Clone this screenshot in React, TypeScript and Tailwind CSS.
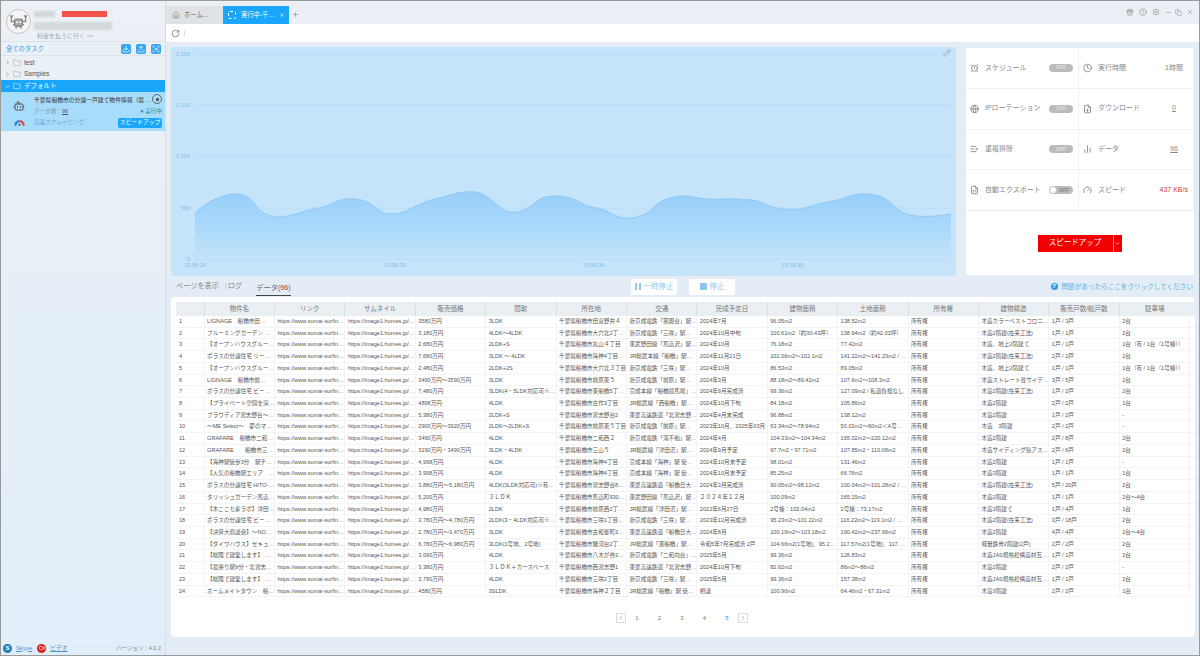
import {
  AlarmClock,
  Bot,
  ChartNoAxesColumn,
  ChevronDown,
  ChevronLeft,
  ChevronRight,
  CircleHelp,
  Clock,
  Copy,
  Download,
  FileDown,
  FileSpreadsheet,
  Folder,
  Gauge,
  Gift,
  Globe,
  Home,
  ListX,
  Minus,
  Pencil,
  Plus,
  RotateCw,
  ScanSearch,
  Settings,
  Upload,
  Video,
  X,
} from "lucide-react";

const columns = [
  "物件名",
  "リンク",
  "サムネイル",
  "販売価格",
  "間取",
  "所在地",
  "交通",
  "完成予定日",
  "建物面積",
  "土地面積",
  "所有権",
  "建物構造",
  "販売戸数/総戸数",
  "駐車場",
];

const rows = [
  ["LIGNAGE　船橋市田…", "3580万円", "3LDK", "千葉県船橋市田喜野井４", "新京成電鉄「薬園台」駅…", "2024年7月", "96.05m2", "138.52m2", "木造カラーベストコロニ…", "1戸 / 3戸", "2台"],
  ["ブルーミングガーデン …", "3,180万円", "4LDK～4LDK", "千葉県船橋市大穴北2丁…", "新京成電鉄「三咲」駅…", "2024年10月中旬", "100.61m2（約30.43坪）", "138.94m2（約42.03坪）", "木造2階建(在来工法)", "1戸 / 1戸", "2台"],
  ["【オープンハウスグルー…", "2,680万円", "2LDK+S", "千葉県船橋市丸山４丁目", "東武野田線「馬込沢」駅…", "2024年10月", "76.18m2", "77.42m2", "木造、地上2階建て", "1戸 / 1戸", "1台（有 / 1台（1号棟））"],
  ["ポラスの分譲住宅 リー…", "7,680万円", "3LDK ～ 4LDK", "千葉県船橋市海神4丁目…", "JR総武本線「船橋」駅…", "2024年11月21日", "102.06m2～102.1m2", "141.22m2～141.23m2 / …", "木造2階建(在来工法)", "2戸 / 2戸", "2台"],
  ["【オープンハウスグルー…", "2,480万円", "2LDK+2S", "千葉県船橋市大穴北３丁目", "新京成電鉄「三咲」駅…", "2024年10月", "86.53m2", "89.05m2", "木造、地上2階建て", "1戸 / 1戸", "1台（有 / 1台（1号棟））"],
  ["LIGNAGE　船橋市前…", "3490万円～3590万円", "3LDK", "千葉県船橋市前原東５", "新京成電鉄「前原」駅…", "2024年3月", "88.18m2～89.42m2", "107.6m2～108.3m2", "木造ストレート葺サイデ…", "3戸 / 5戸", "2台"],
  ["ポラスの分譲住宅 ビー…", "7,480万円", "3LDK(4・5LDK対応可※…", "千葉県船橋市東船橋5丁…", "京成本線「船橋競馬場」…", "2024年9月完成済", "99.36m2", "127.09m2 / 私道負担なし", "木造2階建(在来工法)", "1戸 / 2戸", "2台"],
  ["【プライベート空間を演…", "4898万円", "4LDK", "千葉県船橋市古作3丁目", "JR総武線「西船橋」駅…", "2024年10月下旬", "84.18m2", "105.86m2", "木造2階建", "2戸 / 2戸", "1台"],
  ["ブラウディア習志野台～…", "5,380万円", "2LDK+S", "千葉県船橋市習志野台2", "東葉高速鉄道「北習志野…", "2024年4月末完成", "96.88m2", "138.12m2", "木造2階建", "1戸 / 2戸", "-"],
  ["～ME Select～　夢のマ…", "2900万円～3920万円", "2LDK～2LDK+S", "千葉県船橋市前原東５丁目", "新京成電鉄「前原」駅…", "2023年10月、2025年03月", "63.34m2～78.94m2", "50.01m2～60m2＜A号…", "木造　3階建", "2戸 / 2戸", "-"],
  ["GRAFARE　船橋市二和…", "3490万円", "4LDK", "千葉県船橋市二和西２", "新京成電鉄「滝不動」駅…", "2024年4月", "104.33m2～104.34m2", "165.02m2～220.12m2", "木造2階建", "2戸 / 8戸", "2台"],
  ["GRAFARE　　船橋市三…", "3190万円・3490万円", "3LDK・4LDK", "千葉県船橋市三山５", "JR総武線「津田沼」駅…", "2024年9月予定", "97.7m2・97.71m2", "107.85m2・110.08m2", "木造サイディング貼アス…", "2戸 / 6戸", "2台"],
  ["【海神駅徒歩3分　駅チ…", "4,998万円", "4LDK", "千葉県船橋市海神4丁目", "京成本線「海神」駅 徒…", "2024年10月末予定", "98.01m2", "131.46m2", "木造2階建", "1戸 / 1戸", "-"],
  ["【人気の船橋駅エリア　…", "3,998万円", "4LDK", "千葉県船橋市海神4丁目", "京成本線「海神」駅 徒…", "2024年10月末予定", "85.25m2", "66.76m2", "木造3階建", "1戸 / 1戸", "1台"],
  ["ポラスの分譲住宅 HITO-…", "3,880万円～5,180万円", "4LDK(3LDK対応可)※有…", "千葉県船橋市習志野台8…", "東葉高速鉄道「船橋日大…", "2024年3月完成済", "90.05m2～98.12m2", "100.04m2～101.28m2 / …", "木造2階建(在来工法)", "5戸 / 20戸", "2台"],
  ["タリッシュガーデン馬込…", "5,200万円", "３ＬＤＫ", "千葉県船橋市馬込町930…", "東武野田線「馬込沢」駅…", "２０２４年１２月", "100.09m2", "165.15m2", "木造2階建", "1戸 / 1戸", "2台～4台"],
  ["【木ここち家ラボ】津田…", "4,980万円", "2LDK", "千葉県船橋市前原西2丁…", "JR総武線「津田沼」駅…", "2022年6月27日", "2号棟：102.04m2", "2号棟：73.17m2", "木造3階建て", "1戸 / 4戸", "1台"],
  ["ポラスの分譲住宅 ビー…", "3,780万円～4,780万円", "2LDK(3・4LDK対応可※…", "千葉県船橋市三咲1丁目…", "新京成電鉄「三咲」駅…", "2023年12月完成済", "95.23m2～101.22m2", "116.22m2～119.1m2 / …", "木造2階建(在来工法)", "3戸 / 18戸", "2台"],
  ["【決算大商談会】～NO…", "2,780万円～3,470万円", "3LDK", "千葉県船橋市古和釜町3…", "東葉高速鉄道「船橋日大…", "2024年8月", "100.19m2～103.18m2", "190.42m2～237.66m2", "木造2階建", "4戸 / 4戸", "2台～4台"],
  ["【ダイワハウス】セキュ…", "6,780万円～6,980万円", "3LDK(1号地、2号地)", "千葉県船橋市駿河台2丁…", "JR総武線「東船橋」駅…", "令和5年7月完成済 2戸", "104.66m2(1号地)、95.2…", "117.57m2(1号地)、117.…", "軽量鉄骨2階建(2戸)", "2戸 / 2戸", "2台"],
  ["【総険で建築します】　…", "3,090万円", "4LDK", "千葉県船橋市八木が谷3…", "新京成電鉄「二和向台」…", "2025年5月", "99.36m2", "126.83m2", "木造JAS規格桧構造材瓦…", "1戸 / 1戸", "2台"],
  ["【最寄り駅9分・北習志…", "3,380万円", "３ＬＤＫ＋カースペース", "千葉県船橋市西習志野1", "東葉高速鉄道「北習志野…", "2024年10月下旬", "82.62m2", "86m2～86m2", "木造2階建", "2戸 / 2戸", "-"],
  ["【総険で建築します】　…", "3,790万円", "4LDK", "千葉県船橋市三咲2丁目", "新京成電鉄「三咲」駅…", "2025年5月", "99.36m2", "157.38m2", "木造JAS規格桧構造材瓦…", "1戸 / 1戸", "2台"],
  ["ホームメイトタウン　船…", "4580万円", "3SLDK", "千葉県船橋市海神２丁目", "JR総武線「船橋」駅 徒…", "相談", "100.90m2", "64.46m2・67.31m2", "木造3階建", "2戸 / 2戸", "1台"],
];

// traced from the reference, [x, y] inside the chart box
const wave: [number, number][] = [
  [24, 166], [42, 153], [63, 147], [78, 151], [91, 165], [106, 170], [121, 168], [134, 164],
  [152, 160], [170, 153], [185, 152], [198, 156], [213, 166], [229, 166], [241, 161], [257, 154],
  [272, 150], [287, 146], [305, 145], [318, 151], [333, 163], [346, 165], [359, 160], [371, 151],
  [387, 149], [402, 152], [417, 159], [433, 163], [448, 170], [461, 171], [476, 166], [491, 154],
  [512, 149], [535, 152], [565, 152], [586, 154], [606, 161], [629, 162], [647, 157], [667, 153],
  [688, 147], [711, 150], [731, 165], [746, 169], [764, 169], [780, 167],
];

function smoothPath(points: [number, number][]) {
  let d = `M${points[0][0]} ${points[0][1]}`;
  for (let i = 0; i < points.length - 1; i++) {
    const p0 = points[i - 1] ?? points[i];
    const p1 = points[i];
    const p2 = points[i + 1];
    const p3 = points[i + 2] ?? p2;
    const c1x = p1[0] + (p2[0] - p0[0]) / 6;
    const c1y = p1[1] + (p2[1] - p0[1]) / 6;
    const c2x = p2[0] - (p3[0] - p1[0]) / 6;
    const c2y = p2[1] - (p3[1] - p1[1]) / 6;
    d += ` C${c1x} ${c1y} ${c2x} ${c2y} ${p2[0]} ${p2[1]}`;
  }
  return d;
}

function Chart() {
  const line = smoothPath(wave);
  return (
    <div className="w-[785px] h-[229px] bg-[#c5e4fa] rounded-[2px] shrink-0">
      <svg viewBox="0 0 785 229" className="w-full h-full">
        <defs>
          <linearGradient id="area" x1="0" y1="0" x2="0" y2="1">
            <stop offset="0" stopColor="#98cefa" />
            <stop offset="0.5" stopColor="#a9d8fa" />
            <stop offset="1" stopColor="#c3e3f9" />
          </linearGradient>
        </defs>
        {[
          ["2,000", 7],
          ["1,500", 58],
          ["1,000", 109],
          ["500", 161],
          ["0", 212],
        ].map(([label, y]) => (
          <g key={label}>
            <line x1="24" x2="780" y1={y} y2={y} stroke="#aed9f7" strokeWidth="0.8" />
            <text x="19" y={Number(y) + 2} textAnchor="end" fontSize="5.6" fill="#86bde6">
              {label}
            </text>
          </g>
        ))}
        <path d={`${line} L780 212 L24 212 Z`} fill="url(#area)" />
        <path d={line} fill="none" stroke="#8fcaf5" strokeWidth="1" />
        {[
          ["15:56:24", 24],
          ["15:56:29", 223.5],
          ["15:56:34", 422.5],
          ["15:56:39", 621.5],
        ].map(([label, x]) => (
          <text key={label} x={x} y="220" textAnchor="middle" fontSize="5.6" fill="#86bde6">
            {label}
          </text>
        ))}
        <g transform="translate(772,2)">
          <Pencil x="0" y="0" width="8" height="8" stroke="#8b9aa6" />
        </g>
      </svg>
    </div>
  );
}

function Toggle({ knob }: { knob?: boolean }) {
  if (knob) {
    return (
      <span className="w-6 h-2 rounded-full bg-[#bbbbbb] flex items-center text-[5px] text-[#777] shrink-0">
        <span className="w-2 h-2 rounded-full bg-white border border-[#c8c8c8] mr-[2px]" />
        OFF
      </span>
    );
  }
  return (
    <span className="w-6 h-2 rounded-full bg-[#bbbbbb] flex items-center justify-center text-[5px] text-[#eeeeee] shrink-0">
      OFF
    </span>
  );
}

function StatCell({
  icon,
  label,
  children,
}: {
  icon: React.ReactNode;
  label: string;
  children: React.ReactNode;
}) {
  return (
    <div className="flex items-center h-[40.8px] pl-1 pr-[5px] border-b border-r border-[#eeeeee] text-[7px] text-[#888]">
      <span className="w-[9px] h-[9px] mr-[6px] flex items-center justify-center text-[#777]">{icon}</span>
      <span className="flex-1 whitespace-nowrap">{label}</span>
      {children}
    </div>
  );
}

function StatsPanel() {
  const ic = "w-[10px] h-[10px]";
  const val = "w-[36px] -mr-[4px] text-center";
  return (
    <div className="w-[228px] h-[227px] mt-px bg-white rounded-[2px] flex flex-col">
      <div className="grid grid-cols-[113px_115px]">
        <StatCell icon={<AlarmClock className={ic} />} label="スケジュール">
          <Toggle />
        </StatCell>
        <StatCell icon={<Clock className={ic} />} label="実行時間">
          <span className={val}>1時間</span>
        </StatCell>
        <StatCell icon={<Globe className={ic} />} label="IPローテーション">
          <Toggle />
        </StatCell>
        <StatCell icon={<FileDown className={ic} />} label="ダウンロード">
          <span className={`${val} underline`}>0</span>
        </StatCell>
        <StatCell icon={<ListX className={ic} />} label="重複排除">
          <Toggle />
        </StatCell>
        <StatCell icon={<ChartNoAxesColumn className={ic} />} label="データ">
          <span className={`${val} underline`}>96</span>
        </StatCell>
        <StatCell icon={<FileSpreadsheet className={ic} />} label="自動エクスポート">
          <Toggle knob />
        </StatCell>
        <StatCell icon={<Gauge className={ic} />} label="スピード">
          <span className="w-[36px] text-right text-[#d23b3b] whitespace-nowrap">437 KB/s</span>
        </StatCell>
      </div>
      <div className="flex-1 flex items-center justify-center pr-[1px]">
        <div className="flex h-[17px] bg-[#f00000] text-white">
          <span className="w-[75px] flex items-center justify-center text-[7.5px]">スピードアップ</span>
          <span className="w-[9px] flex items-center justify-center border-l border-[#ff8a8a]">
            <ChevronDown className="w-[7px] h-[7px]" />
          </span>
        </div>
      </div>
    </div>
  );
}

function DataTable() {
  return (
    <div className="text-[5.6px] text-[#555]">
      <div className="grid grid-cols-[28.6px_repeat(14,70.4px)] h-[14px] bg-[#e9eff3] text-[6.5px] text-[#777]">
        <div className="border-r border-[#d9e0e5]" />
        {columns.map((c) => (
          <div key={c} className="flex items-center justify-center border-r border-[#d9e0e5] last:border-r-0">
            {c}
          </div>
        ))}
      </div>
      {rows.map((r, i) => {
        const cells = [r[0], "https://www.sumai-surfin…", "https://image1.homes.jp/…", ...r.slice(1, 8), "所有権", ...r.slice(8)];
        return (
          <div key={i} className="grid grid-cols-[28.6px_repeat(14,70.4px)] h-[11.73px] border-b border-[#f2f4f6] leading-[11px]">
            <div className="pl-[3px] border-r border-[#f2f4f6]">{i + 1}</div>
            {cells.map((c, j) => (
              <div key={j} className="pl-[2.5px] border-r border-[#f2f4f6] whitespace-nowrap overflow-hidden">
                {c}
              </div>
            ))}
          </div>
        );
      })}
    </div>
  );
}

function Pagination() {
  return (
    <div className="flex items-center justify-center mt-[16px] pr-[7px] text-[6px] text-[#777]">
      <span className="w-[10px] h-[10px] border border-[#dcdcdc] flex items-center justify-center">
        <ChevronLeft className="w-2 h-2 text-[#aaa]" />
      </span>
      {[1, 2, 3, 4, 5].map((n) => (
        <span key={n} className={`w-[22.5px] text-center ${n === 5 ? "text-[#2d9be8]" : ""}`}>
          {n}
        </span>
      ))}
      <span className="w-[10px] h-[10px] border border-[#dcdcdc] flex items-center justify-center">
        <ChevronRight className="w-2 h-2 text-[#aaa]" />
      </span>
    </div>
  );
}

function TaskIcon({ children }: { children: React.ReactNode }) {
  return (
    <span className="w-[10px] h-[10px] rounded-[2px] bg-[#37a6ee] flex items-center justify-center text-white">
      {children}
    </span>
  );
}

function AvatarBot() {
  return (
    <svg viewBox="0 0 24 24" className="w-[19px] h-[19px]" fill="none" stroke="#8a8a8a" strokeWidth="1.6">
      <rect x="7" y="9" width="10" height="9" rx="2" fill="#a8a8a8" />
      <circle cx="10" cy="13" r="1.2" fill="#fff" stroke="none" />
      <circle cx="14" cy="13" r="1.2" fill="#fff" stroke="none" />
      <path d="M7 12H3V7M3 7L1.5 4M3 7L5 4M17 12h4V7M21 7l1.5-3M21 7l-2-3M9 18v3M15 18v3M5 16h2M17 16h2" />
    </svg>
  );
}

function SpeedArc() {
  return (
    <svg viewBox="0 0 12 8" className="w-[11px] h-[8px]" fill="none" strokeWidth="2.4">
      <path d="M1.5 8A4.5 4.5 0 0 1 6 3" stroke="#2d7fd0" />
      <path d="M6 3a4.5 4.5 0 0 1 4.5 5" stroke="#e8403a" />
      <circle cx="6" cy="7" r="1.2" fill="#555" stroke="none" />
    </svg>
  );
}

function Sidebar() {
  return (
    <aside className="w-[165px] shrink-0 flex flex-col bg-linear-to-b from-[#ebf1f6] to-[#e1eef9] border-r border-[#d6dfe6]">
      <div className="h-[41px] flex flex-col border-b border-[#dde4ea]">
        <div className="flex pl-[5px] pt-[8px]">
          <span className="w-[25px] h-[25px] shrink-0 rounded-full border border-[#c5c5c5] bg-[#f4f4f4] flex items-center justify-center">
            <AvatarBot />
          </span>
          <div className="ml-[3px] pt-[2px]">
            <div className="flex">
              <span className="w-[21px] h-[6px] bg-[#d2d6da] blur-[1px]" />
              <span className="w-[45px] h-[6px] bg-[#f2534a] ml-[7px] blur-[0.5px]" />
            </div>
            <span className="block w-[78px] h-[8px] bg-[#d4d8dc] mt-[5px] blur-[1px]" />
          </div>
        </div>
        <div className="pl-[36px] -mt-[1px] text-[6px] leading-[7px] text-[#a0a6ab]">料金を払うに行く &gt;&gt;</div>
      </div>
      <div className="h-[14px] flex items-center pl-[5px] pr-[4px] pt-px border-b border-[#dde4ea]">
        <span className="text-[6.3px] text-[#37a0ea] flex-1">全てのタスク</span>
        <span className="flex gap-[5px]">
          <TaskIcon>
            <Download className="w-2 h-2" />
          </TaskIcon>
          <TaskIcon>
            <Upload className="w-2 h-2" />
          </TaskIcon>
          <TaskIcon>
            <ScanSearch className="w-2 h-2" />
          </TaskIcon>
        </span>
      </div>
      <div className="text-[6.5px] text-[#555] pt-[1px]">
        {["test", "Samples"].map((name) => (
          <div key={name} className="flex items-center h-[11.5px] pl-[3px]">
            <ChevronRight className="w-[7px] h-[7px] text-[#777]" />
            <Folder className="w-[8px] h-[8px] text-[#999] ml-[2px] mr-[3px]" strokeWidth={1.5} />
            {name}
          </div>
        ))}
      </div>
      <div className="flex items-center h-[12px] pl-[3px] bg-[#1aa7fb] text-white text-[6.5px]">
        <ChevronDown className="w-[7px] h-[7px]" />
        <Folder className="w-[8px] h-[8px] ml-[2px] mr-[3px]" strokeWidth={1.5} />
        デフォルト
      </div>
      <div className="h-[39px] bg-[#a8dcfb] pl-[12px] pr-[3px] pt-[3px] flex">
        <div className="w-[12px] shrink-0 flex flex-col items-center">
          <Bot className="w-[12px] h-[12px] mt-[5px] text-[#555]" />
          <span className="mt-[6px]">
            <SpeedArc />
          </span>
        </div>
        <div className="ml-[9px] flex-1 min-w-0">
          <div className="flex items-center h-[11px]">
            <span className="flex-1 min-w-0 text-[5.8px] text-[#333] whitespace-nowrap">
              千葉県船橋市の分譲一戸建て物件情報（最…
            </span>
            <span className="w-[10px] h-[10px] rounded-full border border-[#666] flex items-center justify-center -mt-[3px] shrink-0">
              <span className="w-[3px] h-[3px] bg-[#555] rounded-[1px]" />
            </span>
          </div>
          <div className="flex items-center h-[11px] text-[5.6px] text-[#7d9bb0]">
            <span className="flex-1">
              データ数：<span className="text-[#555] underline">96</span>
            </span>
            <span className="text-[#2c8f8f]">● 実行中</span>
          </div>
          <div className="flex items-center h-[11px]">
            <span className="flex-1 text-[5.6px] text-[#6aa5d6] whitespace-nowrap">高速スクレイピング</span>
            <span className="w-[44px] h-[10px] rounded-[2px] bg-[#1aa7fb] text-white text-[5.8px] flex items-center justify-center">
              スピードアップ
            </span>
          </div>
        </div>
      </div>
      <div className="flex-1" />
      <div className="h-[15px] flex items-center pl-[2px] pr-[4px] text-[5.8px] border-t border-[#e8f0f7]">
        <span className="w-[9px] h-[9px] rounded-full bg-[#1f7fb8] text-white flex items-center justify-center text-[6px] font-bold">
          S
        </span>
        <span className="ml-[4px] text-[#4f93cc] underline">Skype</span>
        <span className="w-[9px] h-[9px] rounded-full bg-[#e01f1f] text-white flex items-center justify-center ml-[5px]">
          <Video className="w-[6px] h-[6px]" />
        </span>
        <span className="ml-[4px] text-[#4f93cc] underline">ビデオ</span>
        <span className="ml-auto text-[5.5px] text-[#888]">バージョン：4.0.2</span>
      </div>
    </aside>
  );
}

export default function App() {
  return (
    <div className="w-[1200px] h-[656px] overflow-hidden flex border border-[#9a9a9a] bg-[#e4edf5] font-['Liberation_Sans','Noto_Sans_CJK_JP',sans-serif]">
      <Sidebar />
      <main className="flex-1 min-w-0 flex flex-col">
        <div className="h-[23px] bg-[#eaf0f5] flex items-end pr-[5px]">
          <div className="w-[57px] h-[18px] bg-[#dfe3e7] flex items-center pl-[6px] text-[6.3px] text-[#666] whitespace-nowrap">
            <Home className="w-[8px] h-[8px] mr-[4px] text-[#888]" />
            ホーム…
          </div>
          <div className="w-[66px] h-[18px] bg-[#1aa7fb] flex items-center pl-[5px] text-[6.3px] text-white whitespace-nowrap">
            <span className="w-[8px] h-[8px] rounded-[2px] border border-white border-dashed mr-[5px]" />
            実行中-千…
            <X className="w-[6px] h-[6px] ml-auto mr-[4px]" />
          </div>
          <Plus className="w-[7px] h-[7px] ml-[3px] mb-[6px] text-[#888]" />
          <div className="ml-auto flex items-center mb-[8px] text-[#999]">
            <Gift className="w-[8px] h-[8px]" />
            <CircleHelp className="w-[8px] h-[8px] ml-[5px]" />
            <Settings className="w-[8px] h-[8px] ml-[5px]" />
            <Minus className="w-[7px] h-[7px] ml-[4.5px]" />
            <Copy className="w-[7px] h-[7px] ml-[3.7px]" />
            <X className="w-[8px] h-[8px] ml-[3.8px]" />
          </div>
        </div>
        <div className="h-[18px] bg-white flex items-center pl-[5px]">
          <RotateCw className="w-[9px] h-[9px] text-[#777]" />
          <span className="w-px h-[6px] bg-[#ddd] ml-[4px]" />
        </div>
        <div className="flex gap-[10px] pl-[5px] pt-[5px]">
          <Chart />
          <StatsPanel />
        </div>
        <div className="h-[21px] flex pl-[10px] pr-[6px] items-center text-[7.2px] text-[#888]">
          <div className="w-[455px] flex items-center">
            <span>ページを表示</span>
            <span className="ml-[6px] mr-[1px] text-[#bbb]">|</span>
            <span>ログ</span>
            <span className="ml-[14px] h-[15px] flex items-center border-b border-[#444] text-[#666] translate-y-[2px]">
              データ(<span className="text-[#e02020]">96</span>)
            </span>
          </div>
          <span className="w-[46px] h-[16px] bg-white rounded-[2px] flex items-center justify-center text-[#8fc6ee] text-[7.5px]">
            <span className="w-[2px] h-[7px] bg-[#8fc6ee] mr-[2px]" />
            <span className="w-[2px] h-[7px] bg-[#8fc6ee] mr-[3px]" />
            一時停止
          </span>
          <span className="w-[46px] h-[16px] bg-white rounded-[2px] flex items-center justify-center text-[#8fc6ee] text-[7.5px] ml-[12px]">
            <span className="w-[7px] h-[7px] bg-[#8fc6ee] mr-[3px]" />
            停止
          </span>
          <span className="ml-auto flex items-center text-[#5ab0e8] text-[6.6px]">
            <span className="w-[7px] h-[7px] rounded-full bg-[#2d9be8] text-white text-[6px] font-bold flex items-center justify-center mr-[4px]">
              ?
            </span>
            問題があったらここをクリックしてください
          </span>
        </div>
        <div className="w-[1024px] h-[340px] ml-[5px] bg-white rounded-[4px] pl-[5px] pt-[5px]">
          <DataTable />
          <Pagination />
        </div>
      </main>
    </div>
  );
}
